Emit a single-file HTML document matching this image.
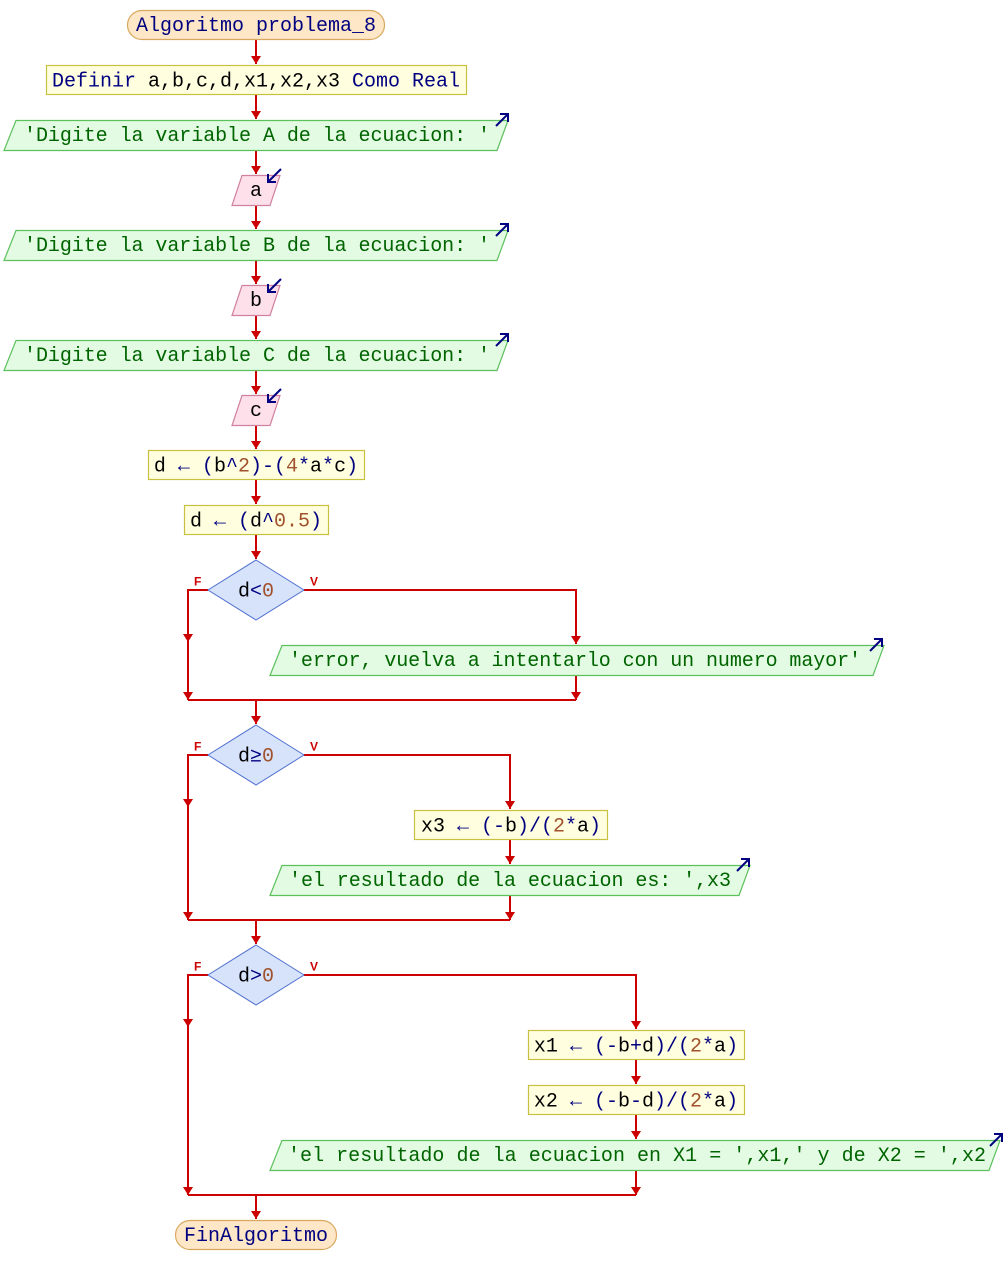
<!DOCTYPE html>
<html><head><meta charset="utf-8"><style>
html,body{margin:0;padding:0;background:#fff;}
svg{display:block;}
text{font-family:"Liberation Mono",monospace;font-size:20px;dominant-baseline:central;transform:translateY(1.5px);}
.k{fill:#000080}.s{fill:#006400}.n{fill:#a0522d}.v{fill:#000}.o{fill:#000080}
.term{fill:#fde7c6;stroke:#d9a860;stroke-width:1.2}
.proc{fill:#ffffe0;stroke:#c8c040;stroke-width:1.2}
.out{fill:#e2fbe2;stroke:#5cc05c;stroke-width:1.2}
.inp{fill:#fde0ea;stroke:#d080a0;stroke-width:1.2}
.dec{fill:#d6e3fb;stroke:#5070d0;stroke-width:1}
.ln{stroke:#cc0000;stroke-width:2;fill:none}
.ah{fill:#cc0000}
.ic{stroke:#000080;stroke-width:2;fill:none}
.lab{font-family:"Liberation Sans",sans-serif;font-size:12px;font-weight:bold;fill:#cc0000}
</style></head><body>
<svg width="1006" height="1285" viewBox="0 0 1006 1285" xmlns="http://www.w3.org/2000/svg">
<path class="ln" d="M256 40V64 M256 95V119 M256 150V174 M256 205V229 M256 260V284 M256 315V339 M256 370V394 M256 425V449 M256 480V504 M256 535V559"/>
<path class="ln" d="M208 590H188V700 M304 590H576V644 M576 675V700 M188 700H576 M256 700V724"/>
<path class="ln" d="M208 755H188V920 M304 755H510V809 M510 840V864 M510 895V920 M188 920H510 M256 920V944"/>
<path class="ln" d="M208 975H188V1195 M304 975H636V1029 M636 1060V1084 M636 1115V1139 M636 1170V1195 M188 1195H636 M256 1195V1219"/>
<g class="ah">
<path d="M251 56H261L256 64Z"/><path d="M251 111H261L256 119Z"/><path d="M251 166H261L256 174Z"/>
<path d="M251 221H261L256 229Z"/><path d="M251 276H261L256 284Z"/><path d="M251 331H261L256 339Z"/>
<path d="M251 386H261L256 394Z"/><path d="M251 441H261L256 449Z"/><path d="M251 496H261L256 504Z"/>
<path d="M251 551H261L256 559Z"/>
<path d="M571 636H581L576 644Z"/><path d="M183 634H193L188 642Z"/><path d="M183 692H193L188 700Z"/><path d="M571 692H581L576 700Z"/>
<path d="M251 716H261L256 724Z"/>
<path d="M505 801H515L510 809Z"/><path d="M183 799H193L188 807Z"/><path d="M505 856H515L510 864Z"/>
<path d="M183 912H193L188 920Z"/><path d="M505 912H515L510 920Z"/><path d="M251 936H261L256 944Z"/>
<path d="M631 1021H641L636 1029Z"/><path d="M183 1019H193L188 1027Z"/><path d="M631 1076H641L636 1084Z"/>
<path d="M631 1131H641L636 1139Z"/><path d="M183 1187H193L188 1195Z"/><path d="M631 1187H641L636 1195Z"/>
<path d="M251 1211H261L256 1219Z"/>
</g>
<rect class="term" x="127.5" y="10.5" width="257" height="29" rx="14.5"/>
<text x="256" y="25" text-anchor="middle" class="k">Algoritmo problema_8</text>

<rect class="proc" x="46.5" y="65.5" width="420" height="29"/>
<text x="256" y="80" text-anchor="middle"><tspan class="k">Definir </tspan><tspan class="v">a,b,c,d,x1,x2,x3 </tspan><tspan class="k">Como Real</tspan></text>

<path class="out" d="M16 120.5H508L497 150.5H4Z"/>
<text x="24" y="135" class="s" textLength="466">'Digite la variable A de la ecuacion: '</text>
<path class="ic" d="M496 126L508 114M500 114H508V122"/>
<path class="inp" d="M242 175.5H280L270 205.5H232Z"/>
<text x="256" y="190" text-anchor="middle" class="v">a</text>
<path class="ic" d="M281 169L268 182M268 174V182H276"/>

<path class="out" d="M16 230.5H508L497 260.5H4Z"/>
<text x="24" y="245" class="s" textLength="466">'Digite la variable B de la ecuacion: '</text>
<path class="ic" d="M496 236L508 224M500 224H508V232"/>
<path class="inp" d="M242 285.5H280L270 315.5H232Z"/>
<text x="256" y="300" text-anchor="middle" class="v">b</text>
<path class="ic" d="M281 279L268 292M268 284V292H276"/>

<path class="out" d="M16 340.5H508L497 370.5H4Z"/>
<text x="24" y="355" class="s" textLength="466">'Digite la variable C de la ecuacion: '</text>
<path class="ic" d="M496 346L508 334M500 334H508V342"/>
<path class="inp" d="M242 395.5H280L270 425.5H232Z"/>
<text x="256" y="410" text-anchor="middle" class="v">c</text>
<path class="ic" d="M281 389L268 402M268 394V402H276"/>

<rect class="proc" x="148.5" y="450.5" width="216" height="29"/>
<text x="256" y="465" text-anchor="middle"><tspan class="v">d </tspan><tspan class="o">← (</tspan><tspan class="v">b</tspan><tspan class="o">^</tspan><tspan class="n">2</tspan><tspan class="o">)-(</tspan><tspan class="n">4</tspan><tspan class="o">*</tspan><tspan class="v">a</tspan><tspan class="o">*</tspan><tspan class="v">c</tspan><tspan class="o">)</tspan></text>

<rect class="proc" x="184.5" y="505.5" width="144" height="29"/>
<text x="256" y="520" text-anchor="middle"><tspan class="v">d </tspan><tspan class="o">← (</tspan><tspan class="v">d</tspan><tspan class="o">^</tspan><tspan class="n">0.5</tspan><tspan class="o">)</tspan></text>

<path class="dec" d="M256 560L304 590L256 620L208 590Z"/>
<text x="256" y="590" text-anchor="middle"><tspan class="v">d</tspan><tspan class="o">&lt;</tspan><tspan class="n">0</tspan></text>
<text x="194" y="580" class="lab">F</text>
<text x="310" y="580" class="lab">V</text>

<path class="out" d="M282 645.5H884L873 675.5H270Z"/>
<text x="289" y="660" class="s" textLength="572">'error, vuelva a intentarlo con un numero mayor'</text>
<path class="ic" d="M870 651L882 639M874 639H882V647"/>

<path class="dec" d="M256 725L304 755L256 785L208 755Z"/>
<text x="256" y="755" text-anchor="middle"><tspan class="v">d</tspan><tspan class="o">≥</tspan><tspan class="n">0</tspan></text>
<text x="194" y="745" class="lab">F</text>
<text x="310" y="745" class="lab">V</text>

<rect class="proc" x="414.5" y="810.5" width="193" height="29"/>
<text x="511" y="825" text-anchor="middle"><tspan class="v">x3 </tspan><tspan class="o">← (-</tspan><tspan class="v">b</tspan><tspan class="o">)/(</tspan><tspan class="n">2</tspan><tspan class="o">*</tspan><tspan class="v">a</tspan><tspan class="o">)</tspan></text>

<path class="out" d="M282 865.5H750L739 895.5H270Z"/>
<text x="289" y="880" class="s" textLength="442">'el resultado de la ecuacion es: ',x3</text>
<path class="ic" d="M737 871L749 859M741 859H749V867"/>

<path class="dec" d="M256 945L304 975L256 1005L208 975Z"/>
<text x="256" y="975" text-anchor="middle"><tspan class="v">d</tspan><tspan class="o">&gt;</tspan><tspan class="n">0</tspan></text>
<text x="194" y="965" class="lab">F</text>
<text x="310" y="965" class="lab">V</text>

<rect class="proc" x="528.5" y="1030.5" width="216" height="29"/>
<text x="636" y="1045" text-anchor="middle"><tspan class="v">x1 </tspan><tspan class="o">← (-</tspan><tspan class="v">b</tspan><tspan class="o">+</tspan><tspan class="v">d</tspan><tspan class="o">)/(</tspan><tspan class="n">2</tspan><tspan class="o">*</tspan><tspan class="v">a</tspan><tspan class="o">)</tspan></text>

<rect class="proc" x="528.5" y="1085.5" width="216" height="29"/>
<text x="636" y="1100" text-anchor="middle"><tspan class="v">x2 </tspan><tspan class="o">← (-</tspan><tspan class="v">b</tspan><tspan class="o">-</tspan><tspan class="v">d</tspan><tspan class="o">)/(</tspan><tspan class="n">2</tspan><tspan class="o">*</tspan><tspan class="v">a</tspan><tspan class="o">)</tspan></text>

<path class="out" d="M282 1140.5H1000L989 1170.5H270Z"/>
<text x="288" y="1155" class="s" textLength="698">'el resultado de la ecuacion en X1 = ',x1,' y de X2 = ',x2</text>
<path class="ic" d="M990 1146L1002 1134M994 1134H1002V1142"/>

<rect class="term" x="175.5" y="1220.5" width="161" height="29" rx="14.5"/>
<text x="256" y="1235" text-anchor="middle" class="k">FinAlgoritmo</text>
</svg>
</body></html>
